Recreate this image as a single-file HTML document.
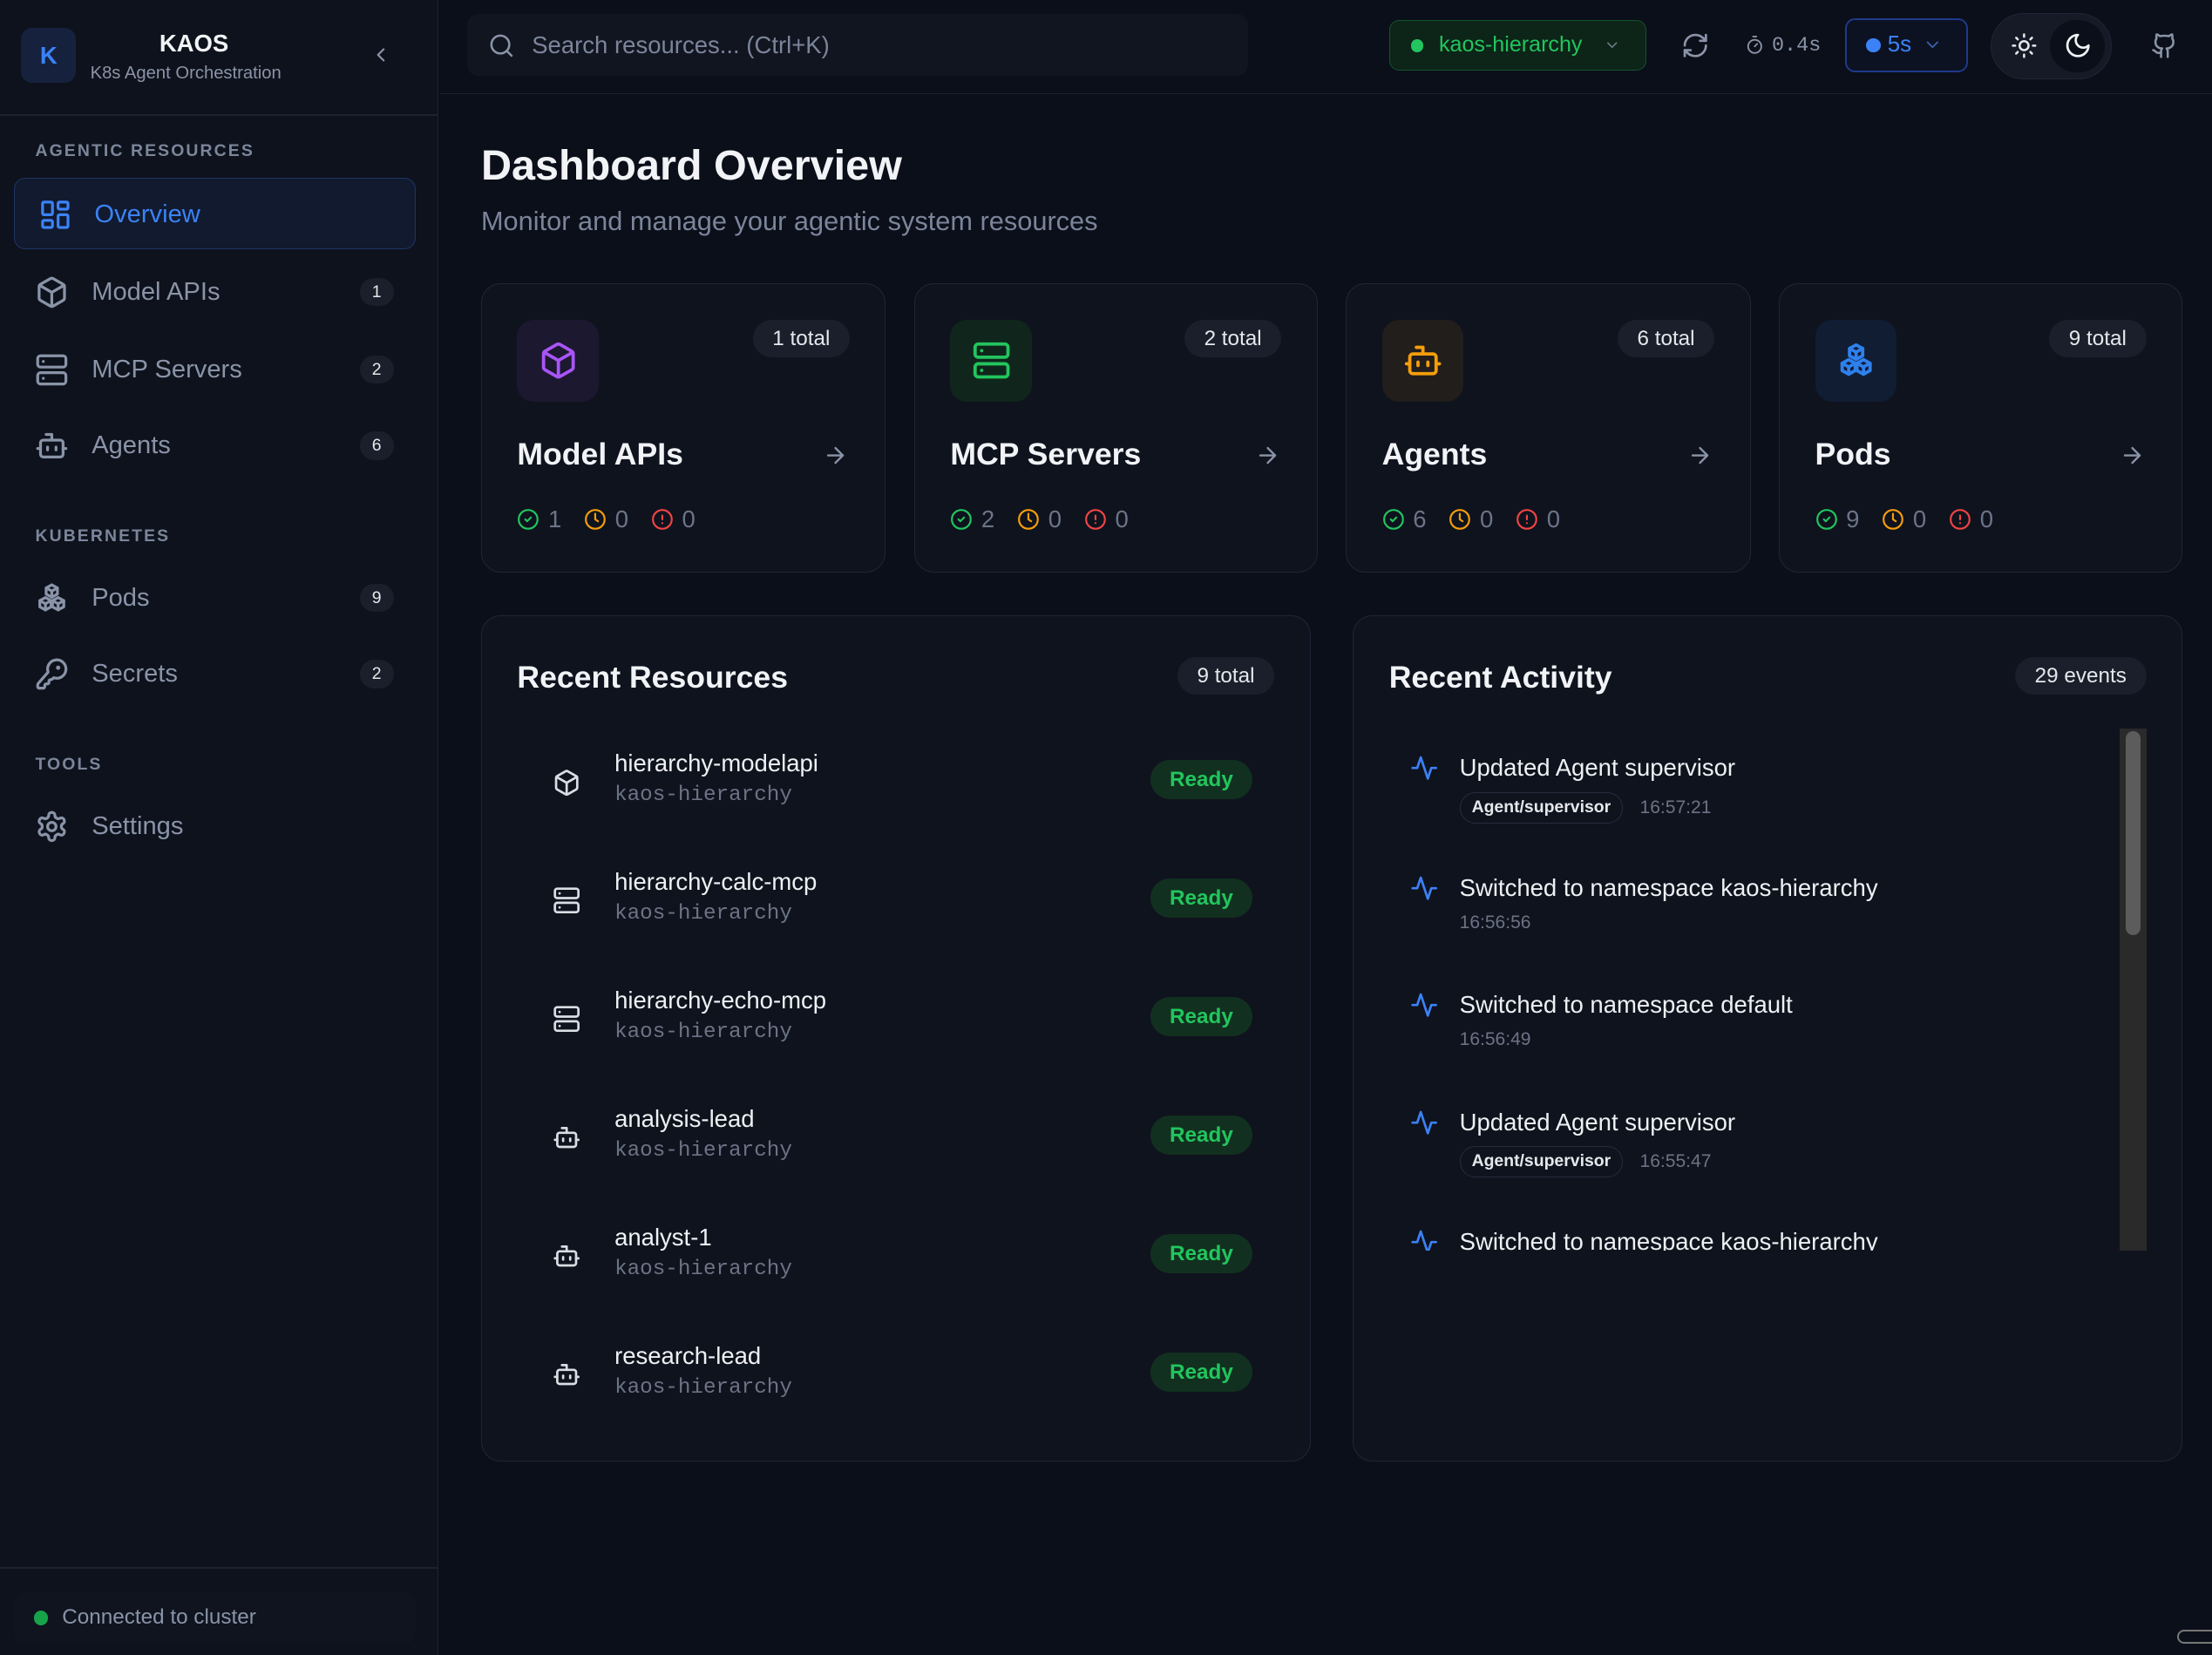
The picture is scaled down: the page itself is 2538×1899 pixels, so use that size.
<!DOCTYPE html>
<html><head><meta charset="utf-8"><style>
*{box-sizing:border-box;margin:0;padding:0}
html,body{width:2538px;height:1898px;overflow:hidden;background:#0b0f19}
#r{position:absolute;left:0;top:0;width:1568px;height:1173px;zoom:1.61862;font-family:"Liberation Sans",sans-serif;color:#e5e7eb;background:#0b0f19}
.a{position:absolute}
svg{fill:none;stroke:currentColor;stroke-width:2;stroke-linecap:round;stroke-linejoin:round}
.side{left:0;top:0;width:311px;height:1173px;background:#0e121c;border-right:1px solid #1c2230}
.lab{font-size:12px;letter-spacing:1.3px;color:#7b869b;font-weight:bold}
.ni{left:25px;width:270px;height:40px;display:flex;align-items:center;color:#8a94a8;font-size:18px}
.ni svg{width:24px;height:24px;margin-right:16px}
.bd{position:absolute;right:16px;width:24px;height:20px;border-radius:10px;background:#1a1f2b;color:#e5e7eb;font-size:12px;text-align:center;line-height:20px}
.card{background:#0f131e;border:1px solid #1f2535;border-radius:14px}
.ib{left:25px;top:25px;width:58px;height:58px;border-radius:12px;display:flex;align-items:center;justify-content:center}
.ib svg{width:28px;height:28px}
.pill{background:#1a1f2b;border-radius:14px;font-size:15px;color:#e5e7eb;height:27px;line-height:27px;padding:0 14px}
.ct{left:25px;top:108px;font-size:22px;font-weight:bold;color:#f1f3f6}
.arr{right:26px;top:112px;width:18px;height:18px;color:#8a94a8}
.st{left:25px;top:157px;display:flex;align-items:center;font-size:17px;color:#6b7488}
.st svg{width:16px;height:16px;margin-right:6px}
.st span{margin-right:16px}
.row{left:25px;width:537px;height:78px;border-radius:10px;background:#0f131e}
.row svg{position:absolute;left:25px;top:29px;width:20px;height:20px;color:#d9dde4}
.rn{position:absolute;left:69px;top:16px;font-size:17px;color:#eef0f3}
.rs{position:absolute;left:69px;top:40px;font-size:15px;color:#6b7385;font-family:"Liberation Mono",monospace}
.rdy{position:absolute;left:449px;top:23px;width:72px;height:28px;border-radius:14px;background:#12301f;color:#22c55e;font-size:15px;font-weight:bold;text-align:center;line-height:28px}
.ev{left:40px;width:480px}
.ev svg{position:absolute;left:0;top:0;width:20px;height:20px;color:#3b82f6}
.et{position:absolute;left:35px;top:0;font-size:17px;color:#eef0f3;white-space:nowrap}
.em{position:absolute;left:35px;top:27px;display:flex;align-items:center;font-size:13px;color:#6b7385;white-space:nowrap}
.tag{border:1px solid #252c3d;border-radius:11px;height:22px;line-height:20px;padding:0 8px;color:#e5e7eb;font-size:12px;font-weight:bold;margin-right:12px}
</style></head><body><div id="r">

<div class="a side">
  <div class="a" style="left:15px;top:20px;width:39px;height:39px;border-radius:8px;background:#16223d;color:#3b82f6;font-weight:bold;font-size:17px;text-align:center;line-height:39px">K</div>
  <div class="a" style="left:64px;top:21px;width:147px;text-align:center;font-size:17px;font-weight:bold;color:#f1f3f6">KAOS</div>
  <div class="a" style="left:64px;top:45px;font-size:12.5px;color:#8a94a8;white-space:nowrap">K8s Agent Orchestration</div>
  <svg class="a" style="left:262px;top:31px;width:16px;height:16px;color:#8a94a8" viewBox="0 0 24 24"><path d="m15 18-6-6 6-6"/></svg>
  <div class="a" style="left:0;top:81px;width:311px;height:1px;background:#1c2230"></div>
  <div class="a lab" style="left:25px;top:100px">AGENTIC RESOURCES</div>
  <div class="a" style="left:10px;top:126px;width:285px;height:51px;border-radius:8px;background:#111a2e;border:1px solid #1e3566"></div>
  <div class="a ni" style="left:27px;top:132px;color:#3b82f6"><svg viewBox="0 0 24 24"><rect x="3" y="3" width="7" height="9" rx="1"/><rect x="14" y="3" width="7" height="5" rx="1"/><rect x="14" y="12" width="7" height="9" rx="1"/><rect x="3" y="16" width="7" height="5" rx="1"/></svg>Overview</div>
  <div class="a ni" style="top:187px"><svg viewBox="0 0 24 24"><path d="M21 8a2 2 0 0 0-1-1.73l-7-4a2 2 0 0 0-2 0l-7 4A2 2 0 0 0 3 8v8a2 2 0 0 0 1 1.73l7 4a2 2 0 0 0 2 0l7-4A2 2 0 0 0 21 16Z"/><path d="m3.3 7 8.7 5 8.7-5"/><path d="M12 22V12"/></svg>Model APIs<div class="bd">1</div></div>
  <div class="a ni" style="top:242px"><svg viewBox="0 0 24 24"><rect x="2" y="2" width="20" height="8" rx="2"/><rect x="2" y="14" width="20" height="8" rx="2"/><path d="M6 6h.01M6 18h.01"/></svg>MCP Servers<div class="bd">2</div></div>
  <div class="a ni" style="top:296px"><svg viewBox="0 0 24 24"><path d="M12 8V4H8"/><rect width="16" height="12" x="4" y="8" rx="2"/><path d="M2 14h2M20 14h2M15 13v2M9 13v2"/></svg>Agents<div class="bd">6</div></div>
  <div class="a lab" style="left:25px;top:373px">KUBERNETES</div>
  <div class="a ni" style="top:404px"><svg viewBox="0 0 24 24"><path d="M12 2.5l4 2.2v4.4l-4 2.2-4-2.2V4.7z"/><path d="M7.5 11.5l4 2.2v4.4l-4 2.2-4-2.2v-4.4z"/><path d="M16.5 11.5l4 2.2v4.4l-4 2.2-4-2.2v-4.4z"/><path d="M8 4.7l4 2.2 4-2.2M12 6.9v4.4M3.5 13.7l4 2.2 4-2.2M7.5 15.9v4.4M12.5 13.7l4 2.2 4-2.2M16.5 15.9v4.4"/></svg>Pods<div class="bd">9</div></div>
  <div class="a ni" style="top:458px"><svg viewBox="0 0 24 24"><path d="M2.6 18.4A2 2 0 0 0 2 19.8V21a1 1 0 0 0 1 1h3a1 1 0 0 0 1-1v-1a1 1 0 0 1 1-1h1a1 1 0 0 0 1-1v-1a1 1 0 0 1 1-1h.2a2 2 0 0 0 1.4-.6l.8-.8a6.5 6.5 0 1 0-4-4z"/><circle cx="16.5" cy="7.5" r=".5" fill="currentColor"/></svg>Secrets<div class="bd">2</div></div>
  <div class="a lab" style="left:25px;top:535px">TOOLS</div>
  <div class="a ni" style="top:566px"><svg viewBox="0 0 24 24"><path d="M12.2 2h-.4a2 2 0 0 0-2 2v.2a2 2 0 0 1-1 1.7l-.4.3a2 2 0 0 1-2 0l-.2-.1a2 2 0 0 0-2.7.7l-.2.4a2 2 0 0 0 .7 2.7l.2.1a2 2 0 0 1 1 1.7v.5a2 2 0 0 1-1 1.7l-.2.1a2 2 0 0 0-.7 2.7l.2.4a2 2 0 0 0 2.7.7l.2-.1a2 2 0 0 1 2 0l.4.3a2 2 0 0 1 1 1.7v.2a2 2 0 0 0 2 2h.4a2 2 0 0 0 2-2v-.2a2 2 0 0 1 1-1.7l.4-.3a2 2 0 0 1 2 0l.2.1a2 2 0 0 0 2.7-.7l.2-.4a2 2 0 0 0-.7-2.7l-.2-.1a2 2 0 0 1-1-1.7v-.5a2 2 0 0 1 1-1.7l.2-.1a2 2 0 0 0 .7-2.7l-.2-.4a2 2 0 0 0-2.7-.7l-.2.1a2 2 0 0 1-2 0l-.4-.3a2 2 0 0 1-1-1.7V4a2 2 0 0 0-2-2z"/><circle cx="12" cy="12" r="3"/></svg>Settings</div>
  <div class="a" style="left:0;top:1111px;width:311px;height:1px;background:#1c2230"></div>
  <div class="a" style="left:10px;top:1129px;width:285px;height:36px;border-radius:8px;background:#0f141f"></div>
  <div class="a" style="left:24px;top:1142px;width:10px;height:10px;border-radius:5px;background:#16a34a"></div>
  <div class="a" style="left:44px;top:1138px;font-size:15px;color:#8a94a8">Connected to cluster</div>
</div>

<!-- top bar -->
<div class="a" style="left:312px;top:66px;width:1256px;height:1px;background:#1c2230"></div>
<div class="a" style="left:331px;top:10px;width:554px;height:44px;border-radius:8px;background:#111520"></div>
<svg class="a" style="left:346px;top:23px;width:19px;height:19px;color:#8a94a8" viewBox="0 0 24 24"><circle cx="11" cy="11" r="8"/><path d="m21 21-4.3-4.3"/></svg>
<div class="a" style="left:377px;top:22px;font-size:17px;color:#7b859a">Search resources... (Ctrl+K)</div>
<div class="a" style="left:985px;top:14px;width:182px;height:36px;border-radius:7px;background:#0d2418;border:1px solid #14532d"></div>
<div class="a" style="left:1000px;top:28px;width:9px;height:9px;border-radius:5px;background:#22c55e"></div>
<div class="a" style="left:1020px;top:23px;font-size:15.5px;color:#22c55e">kaos-hierarchy</div>
<svg class="a" style="left:1137px;top:26px;width:12px;height:12px;color:#6b7a8a" viewBox="0 0 24 24"><path d="m6 9 6 6 6-6"/></svg>
<svg class="a" style="left:1192px;top:22px;width:20px;height:20px;color:#8a94a8" viewBox="0 0 24 24"><path d="M3 12a9 9 0 0 1 9-9 9.75 9.75 0 0 1 6.74 2.74L21 8"/><path d="M21 3v5h-5"/><path d="M21 12a9 9 0 0 1-9 9 9.75 9.75 0 0 1-6.74-2.74L3 16"/><path d="M8 16H3v5"/></svg>
<svg class="a" style="left:1237px;top:25px;width:14px;height:14px;color:#8a94a8" viewBox="0 0 24 24"><path d="M10 2h4M12 14l3-3"/><circle cx="12" cy="14" r="8"/></svg>
<div class="a" style="left:1256px;top:24px;font-size:14.5px;color:#8a94a8;font-family:'Liberation Mono',monospace">0.4s</div>
<div class="a" style="left:1308px;top:13px;width:87px;height:38px;border-radius:7px;border:1.5px solid #1e3a8a;background:#0c1222"></div>
<div class="a" style="left:1323px;top:27px;width:10px;height:10px;border-radius:5px;background:#3b82f6"></div>
<div class="a" style="left:1338px;top:23px;font-size:16px;color:#3b82f6">5s</div>
<svg class="a" style="left:1363px;top:25px;width:14px;height:14px;color:#3b5ea8" viewBox="0 0 24 24"><path d="m6 9 6 6 6-6"/></svg>
<div class="a" style="left:1411px;top:9px;width:86px;height:47px;border-radius:24px;background:#151a26;border:1px solid #1f2535"></div>
<div class="a" style="left:1453px;top:14px;width:39px;height:37px;border-radius:19px;background:#0b0f19"></div>
<svg class="a" style="left:1425px;top:23px;width:19px;height:19px;color:#e5e7eb" viewBox="0 0 24 24"><circle cx="12" cy="12" r="4"/><path d="M12 2v2M12 20v2M4.93 4.93l1.41 1.41M17.66 17.66l1.41 1.41M2 12h2M20 12h2M6.34 17.66l-1.41 1.41M19.07 4.93l-1.41 1.41"/></svg>
<svg class="a" style="left:1463px;top:22px;width:20px;height:20px;color:#f1f3f6" viewBox="0 0 24 24"><path d="M12 3a6 6 0 0 0 9 9 9 9 0 1 1-9-9Z"/></svg>
<svg class="a" style="left:1525px;top:23px;width:19px;height:19px;color:#8a94a8" viewBox="0 0 24 24"><path d="M15 22v-4a4.8 4.8 0 0 0-1-3.5c3 0 6-2 6-5.5.08-1.25-.27-2.48-1-3.5.28-1.15.28-2.35 0-3.5 0 0-1 0-3 1.5-2.64-.5-5.36-.5-8 0C6 2 5 2 5 2c-.3 1.15-.3 2.35 0 3.5A5.4 5.4 0 0 0 4 9c0 3.5 3 5.5 6 5.5-.39.49-.68 1.05-.85 1.65-.17.6-.22 1.23-.15 1.85v4"/><path d="M9 18c-4.51 2-5-2-7-2"/></svg>

<div class="a" style="left:341px;top:100px;font-size:30px;font-weight:bold;color:#f1f3f6">Dashboard Overview</div>
<div class="a" style="left:341px;top:146px;font-size:19px;color:#7b859a">Monitor and manage your agentic system resources</div>

<!-- stat cards -->
<div class="a card" style="left:341px;top:201px;width:287px;height:205px">
 <div class="a ib" style="background:#1c1830;color:#a855f7"><svg viewBox="0 0 24 24"><path d="M21 8a2 2 0 0 0-1-1.73l-7-4a2 2 0 0 0-2 0l-7 4A2 2 0 0 0 3 8v8a2 2 0 0 0 1 1.73l7 4a2 2 0 0 0 2 0l7-4A2 2 0 0 0 21 16Z"/><path d="m3.3 7 8.7 5 8.7-5"/><path d="M12 22V12"/></svg></div>
 <div class="a pill" style="right:25px;top:25px">1 total</div>
 <div class="a ct">Model APIs</div>
 <svg class="a arr" viewBox="0 0 24 24"><path d="M5 12h14M12 5l7 7-7 7"/></svg>
 <div class="a st"><svg viewBox="0 0 24 24" style="color:#22c55e"><circle cx="12" cy="12" r="10"/><path d="m9 12 2 2 4-4"/></svg><span>1</span><svg viewBox="0 0 24 24" style="color:#f59e0b"><circle cx="12" cy="12" r="10"/><path d="M12 6v6l3 2"/></svg><span>0</span><svg viewBox="0 0 24 24" style="color:#ef4444"><circle cx="12" cy="12" r="10"/><path d="M12 8v4M12 16h.01"/></svg><span>0</span></div>
</div>
<div class="a card" style="left:648px;top:201px;width:286px;height:205px">
 <div class="a ib" style="background:#10261c;color:#22c55e"><svg viewBox="0 0 24 24"><rect x="2" y="2" width="20" height="8" rx="2"/><rect x="2" y="14" width="20" height="8" rx="2"/><path d="M6 6h.01M6 18h.01"/></svg></div>
 <div class="a pill" style="right:25px;top:25px">2 total</div>
 <div class="a ct">MCP Servers</div>
 <svg class="a arr" viewBox="0 0 24 24"><path d="M5 12h14M12 5l7 7-7 7"/></svg>
 <div class="a st"><svg viewBox="0 0 24 24" style="color:#22c55e"><circle cx="12" cy="12" r="10"/><path d="m9 12 2 2 4-4"/></svg><span>2</span><svg viewBox="0 0 24 24" style="color:#f59e0b"><circle cx="12" cy="12" r="10"/><path d="M12 6v6l3 2"/></svg><span>0</span><svg viewBox="0 0 24 24" style="color:#ef4444"><circle cx="12" cy="12" r="10"/><path d="M12 8v4M12 16h.01"/></svg><span>0</span></div>
</div>
<div class="a card" style="left:954px;top:201px;width:287px;height:205px">
 <div class="a ib" style="background:#211e1c;color:#f59e0b"><svg viewBox="0 0 24 24"><path d="M12 8V4H8"/><rect width="16" height="12" x="4" y="8" rx="2"/><path d="M2 14h2M20 14h2M15 13v2M9 13v2"/></svg></div>
 <div class="a pill" style="right:25px;top:25px">6 total</div>
 <div class="a ct">Agents</div>
 <svg class="a arr" viewBox="0 0 24 24"><path d="M5 12h14M12 5l7 7-7 7"/></svg>
 <div class="a st"><svg viewBox="0 0 24 24" style="color:#22c55e"><circle cx="12" cy="12" r="10"/><path d="m9 12 2 2 4-4"/></svg><span>6</span><svg viewBox="0 0 24 24" style="color:#f59e0b"><circle cx="12" cy="12" r="10"/><path d="M12 6v6l3 2"/></svg><span>0</span><svg viewBox="0 0 24 24" style="color:#ef4444"><circle cx="12" cy="12" r="10"/><path d="M12 8v4M12 16h.01"/></svg><span>0</span></div>
</div>
<div class="a card" style="left:1261px;top:201px;width:286px;height:205px">
 <div class="a ib" style="background:#111d33;color:#2f80ed"><svg viewBox="0 0 24 24"><path d="M12 2.5l4 2.2v4.4l-4 2.2-4-2.2V4.7z"/><path d="M7.5 11.5l4 2.2v4.4l-4 2.2-4-2.2v-4.4z"/><path d="M16.5 11.5l4 2.2v4.4l-4 2.2-4-2.2v-4.4z"/><path d="M8 4.7l4 2.2 4-2.2M12 6.9v4.4M3.5 13.7l4 2.2 4-2.2M7.5 15.9v4.4M12.5 13.7l4 2.2 4-2.2M16.5 15.9v4.4"/></svg></div>
 <div class="a pill" style="right:25px;top:25px">9 total</div>
 <div class="a ct">Pods</div>
 <svg class="a arr" viewBox="0 0 24 24"><path d="M5 12h14M12 5l7 7-7 7"/></svg>
 <div class="a st"><svg viewBox="0 0 24 24" style="color:#22c55e"><circle cx="12" cy="12" r="10"/><path d="m9 12 2 2 4-4"/></svg><span>9</span><svg viewBox="0 0 24 24" style="color:#f59e0b"><circle cx="12" cy="12" r="10"/><path d="M12 6v6l3 2"/></svg><span>0</span><svg viewBox="0 0 24 24" style="color:#ef4444"><circle cx="12" cy="12" r="10"/><path d="M12 8v4M12 16h.01"/></svg><span>0</span></div>
</div>

<!-- recent resources -->
<div class="a card" style="left:341px;top:436px;width:588px;height:600px">
 <div class="a" style="left:25px;top:31px;font-size:22px;font-weight:bold;color:#f1f3f6">Recent Resources</div>
 <div class="a pill" style="right:25px;top:29px">9 total</div>
 <div class="a row" style="top:79px"><svg viewBox="0 0 24 24"><path d="M21 8a2 2 0 0 0-1-1.73l-7-4a2 2 0 0 0-2 0l-7 4A2 2 0 0 0 3 8v8a2 2 0 0 0 1 1.73l7 4a2 2 0 0 0 2 0l7-4A2 2 0 0 0 21 16Z"/><path d="m3.3 7 8.7 5 8.7-5"/><path d="M12 22V12"/></svg><div class="rn">hierarchy-modelapi</div><div class="rs">kaos-hierarchy</div><div class="rdy">Ready</div></div>
 <div class="a row" style="top:163px"><svg viewBox="0 0 24 24"><rect x="2" y="2" width="20" height="8" rx="2"/><rect x="2" y="14" width="20" height="8" rx="2"/><path d="M6 6h.01M6 18h.01"/></svg><div class="rn">hierarchy-calc-mcp</div><div class="rs">kaos-hierarchy</div><div class="rdy">Ready</div></div>
 <div class="a row" style="top:247px"><svg viewBox="0 0 24 24"><rect x="2" y="2" width="20" height="8" rx="2"/><rect x="2" y="14" width="20" height="8" rx="2"/><path d="M6 6h.01M6 18h.01"/></svg><div class="rn">hierarchy-echo-mcp</div><div class="rs">kaos-hierarchy</div><div class="rdy">Ready</div></div>
 <div class="a row" style="top:331px"><svg viewBox="0 0 24 24"><path d="M12 8V4H8"/><rect width="16" height="12" x="4" y="8" rx="2"/><path d="M2 14h2M20 14h2M15 13v2M9 13v2"/></svg><div class="rn">analysis-lead</div><div class="rs">kaos-hierarchy</div><div class="rdy">Ready</div></div>
 <div class="a row" style="top:415px"><svg viewBox="0 0 24 24"><path d="M12 8V4H8"/><rect width="16" height="12" x="4" y="8" rx="2"/><path d="M2 14h2M20 14h2M15 13v2M9 13v2"/></svg><div class="rn">analyst-1</div><div class="rs">kaos-hierarchy</div><div class="rdy">Ready</div></div>
 <div class="a row" style="top:499px"><svg viewBox="0 0 24 24"><path d="M12 8V4H8"/><rect width="16" height="12" x="4" y="8" rx="2"/><path d="M2 14h2M20 14h2M15 13v2M9 13v2"/></svg><div class="rn">research-lead</div><div class="rs">kaos-hierarchy</div><div class="rdy">Ready</div></div>
</div>

<!-- recent activity -->
<div class="a card" style="left:959px;top:436px;width:588px;height:600px">
 <div class="a" style="left:25px;top:31px;font-size:22px;font-weight:bold;color:#f1f3f6">Recent Activity</div>
 <div class="a pill" style="right:25px;top:29px">29 events</div>
 <div class="a" style="left:0;top:80px;width:588px;height:370px;overflow:hidden">
  <div class="a ev" style="top:18px"><svg viewBox="0 0 24 24"><path d="M22 12h-4l-3 9L9 3l-3 9H2"/></svg><div class="et">Updated Agent supervisor</div><div class="em"><span class="tag">Agent/supervisor</span>16:57:21</div></div>
  <div class="a ev" style="top:103px"><svg viewBox="0 0 24 24"><path d="M22 12h-4l-3 9L9 3l-3 9H2"/></svg><div class="et">Switched to namespace kaos-hierarchy</div><div class="em">16:56:56</div></div>
  <div class="a ev" style="top:186px"><svg viewBox="0 0 24 24"><path d="M22 12h-4l-3 9L9 3l-3 9H2"/></svg><div class="et">Switched to namespace default</div><div class="em">16:56:49</div></div>
  <div class="a ev" style="top:269px"><svg viewBox="0 0 24 24"><path d="M22 12h-4l-3 9L9 3l-3 9H2"/></svg><div class="et">Updated Agent supervisor</div><div class="em"><span class="tag">Agent/supervisor</span>16:55:47</div></div>
  <div class="a ev" style="top:354px"><svg viewBox="0 0 24 24"><path d="M22 12h-4l-3 9L9 3l-3 9H2"/></svg><div class="et">Switched to namespace kaos-hierarchy</div></div>
  <div class="a" style="left:543px;top:0;width:19px;height:370px;background:#2a2a2a"></div>
  <div class="a" style="left:547px;top:2px;width:11px;height:144px;border-radius:6px;background:#5c5c5c"></div>
 </div>
</div>
<div class="a" style="left:1543px;top:1155px;width:30px;height:10px;border:1.5px solid #777;border-radius:5px"></div>
</div></body></html>
